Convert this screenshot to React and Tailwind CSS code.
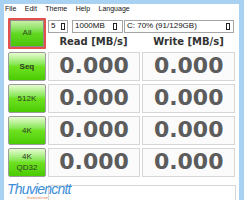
import React from "react";

function Drop() {
  return <span className="inline-block w-[4px] h-[7px] border border-[#222] shrink-0" />;
}

function Btn({ children, bold }) {
  return (
    <div
      className={
        "w-[38px] h-full border border-[#9c9c9c] rounded-[2px] bg-gradient-to-b from-[#e6fbcf] via-[#6fe21f] to-[#4acb02] flex flex-col items-center justify-center text-[8px] leading-[11px] text-[#2e3a26] " +
        (bold ? "font-bold" : "")
      }
    >
      {children}
    </div>
  );
}

function Cell() {
  return (
    <div className="w-[93px] h-full border border-[#d6d6d6] bg-[#fbfbfb] flex items-center justify-center">
      <span className="font-['DejaVu_Sans',sans-serif] font-bold text-[22px] leading-none text-[#5c5c5c]">0.000</span>
    </div>
  );
}

function Row({ children, bold }) {
  return (
    <div className="flex gap-[2px] h-[29px]">
      <Btn bold={bold}>{children}</Btn>
      <Cell />
      <Cell />
    </div>
  );
}

export default function App() {
  return (
    <div className="relative w-[244px] h-[200px] overflow-hidden bg-[#a9d2f2] pl-[4px] pr-[5px] pt-[4px] font-['Liberation_Sans',sans-serif]">
      <div className="bg-white h-full flex flex-col">
        <div className="h-[14px] flex items-center gap-[8.5px] pl-[1px] text-[7px] text-[#111]">
          <span>File</span>
          <span>Edit</span>
          <span>Theme</span>
          <span>Help</span>
          <span>Language</span>
        </div>
        <div className="px-[4px] flex flex-col">
          <div className="flex h-[34px] mt-[3px]">
            <div className="w-[39px] h-[31px] border-2 border-[#e2504c] rounded-[1px] p-0">
              <div className="w-full h-full border border-[#8c8c8c] bg-gradient-to-b from-[#c9f0a6] via-[#62d820] to-[#48c408] flex items-center justify-center text-[8px] text-[#2e4a22]">
                All
              </div>
            </div>
            <div className="ml-[1px] flex flex-col w-[188px]">
              <div className="flex h-[13px] mt-[2px] text-[8px] text-[#111]">
                <div className="ml-[1px] w-[20px] border border-[#a5a5a5] bg-white flex items-center justify-between pl-[2px] pr-[2px]">
                  <span>5</span>
                  <Drop />
                </div>
                <div className="ml-[4px] w-[51px] border border-[#a5a5a5] bg-white flex items-center justify-between pl-[2px] pr-[5px]">
                  <span>1000MB</span>
                  <Drop />
                </div>
                <div className="ml-[1px] w-[110px] border border-[#a5a5a5] bg-white flex items-center justify-between pl-[2px] pr-[3px]">
                  <span>C: 70% (91/129GB)</span>
                  <Drop />
                </div>
              </div>
              <div className="flex gap-[2px] mt-[3px] h-[12px] items-center font-['DejaVu_Sans',sans-serif] font-bold text-[10px] text-[#333]">
                <div className="w-[93px] text-center">Read [MB/s]</div>
                <div className="w-[93px] text-center">Write [MB/s]</div>
              </div>
            </div>
          </div>
          <div className="flex flex-col gap-[3px]">
            <Row bold>Seq</Row>
            <Row>512K</Row>
            <Row>4K</Row>
            <Row>
              <span>4K</span>
              <span>QD32</span>
            </Row>
          </div>
          <div className="mt-[8px] ml-[40px] w-[188px] h-[20px] border border-[#d6d6d6]" />
        </div>
      </div>
      <div className="absolute left-[7px] top-[182px] flex flex-col leading-none">
        <span className="italic text-[14px] tracking-[-0.8px] text-[#3c8ed8]">Thuviencntt</span>
        <span className="text-[3px] text-[#e07a3a] ml-[20px] mt-[1px]">thuviencntt.com</span>
      </div>
    </div>
  );
}
